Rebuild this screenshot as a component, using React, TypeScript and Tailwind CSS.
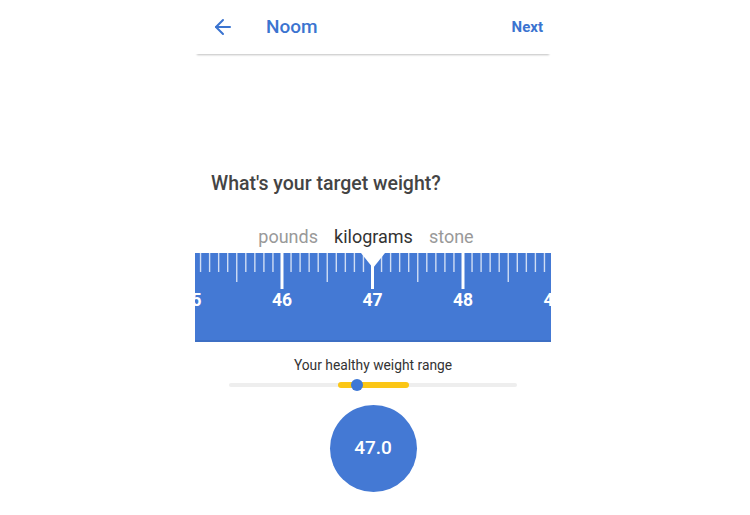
import React from 'react';
import { ArrowLeft } from 'lucide-react';

const PX_PER_UNIT = 90.5;
const ORIGIN = 87; // x of 46 inside ruler

function Ruler() {
  const ticks: React.ReactNode[] = [];
  for (let i = 440; i <= 500; i++) {
    const x = ORIGIN + ((i - 460) / 10) * PX_PER_UNIT;
    if (x < -2 || x > 358) continue;
    const major = i % 10 === 0;
    const mid = i % 5 === 0 && !major;
    const len = major ? 36 : mid ? 29 : 19;
    ticks.push(
      <line
        key={i}
        x1={x}
        x2={x}
        y1={0}
        y2={len}
        stroke="white"
        strokeOpacity={major ? 1 : 0.75}
        strokeWidth={major ? 3 : 1.4}
      />
    );
  }
  const labels = [45, 46, 47, 48, 49].map((n) => (
    <text
      key={n}
      x={ORIGIN + (n - 46) * PX_PER_UNIT}
      y={53}
      textAnchor="middle"
      fill="white"
      fontSize="17.5"
      fontWeight="700"
      fontFamily="Roboto, sans-serif"
    >
      {n}
    </text>
  ));
  return (
    <div className="relative h-[89px] w-full bg-[#4479d4] overflow-hidden">
      <svg width="356" height="89" viewBox="0 0 356 89" className="block">
        {ticks}
        {labels}
        <polygon points="166,0 190,0 178,15" fill="white" />
        <rect x="0" y="87" width="356" height="2" fill="#3d6fc4" />
      </svg>
    </div>
  );
}

export default function App() {
  return (
    <div className="min-h-[515px] w-[750px] bg-white font-['Roboto',sans-serif]">
      <div className="ml-[195px] w-[356px] flex flex-col">
        <header className="h-[54px] flex items-center px-4 shadow-[0_3px_2px_-2px_rgba(0,0,0,0.25)]">
          <ArrowLeft size={24} strokeWidth={2} className="text-[#3b74d0]" />
          <span className="ml-[31px] text-[19px] font-medium text-[#3b74d0]">Noom</span>
          <span className="ml-auto mr-[-8px] text-[15px] font-bold text-[#3b74d0]">Next</span>
        </header>

        <h1 className="mt-[118px] pl-4 text-[19.5px] leading-6 font-medium text-[#444]">
          What's your target weight?
        </h1>

        <div className="mt-[31px] flex justify-center gap-4 text-[18px] leading-5 pr-[14px]">
          <span className="text-[#999]">pounds</span>
          <span className="text-[#333]">kilograms</span>
          <span className="text-[#999]">stone</span>
        </div>

        <div className="mt-[6px]">
          <Ruler />
        </div>

        <p className="mt-[15px] text-center text-[13.8px] leading-4 text-[#333]">Your healthy weight range</p>

        <div className="relative mt-[10px] mx-[34px] h-[4px] rounded-full bg-[#eeeeee]">
          <div className="absolute left-[109px] top-[-1px] h-[6px] w-[71px] rounded-full bg-[#fbc616]" />
          <div className="absolute left-[122px] top-[-4px] h-[12px] w-[12px] rounded-full bg-[#3d78d6]" />
        </div>

        <div className="mt-[18px] mx-auto flex h-[87px] w-[87px] items-center justify-center rounded-full bg-[#4479d4]">
          <span className="text-[19px] font-medium text-white">47.0</span>
        </div>
      </div>
    </div>
  );
}
